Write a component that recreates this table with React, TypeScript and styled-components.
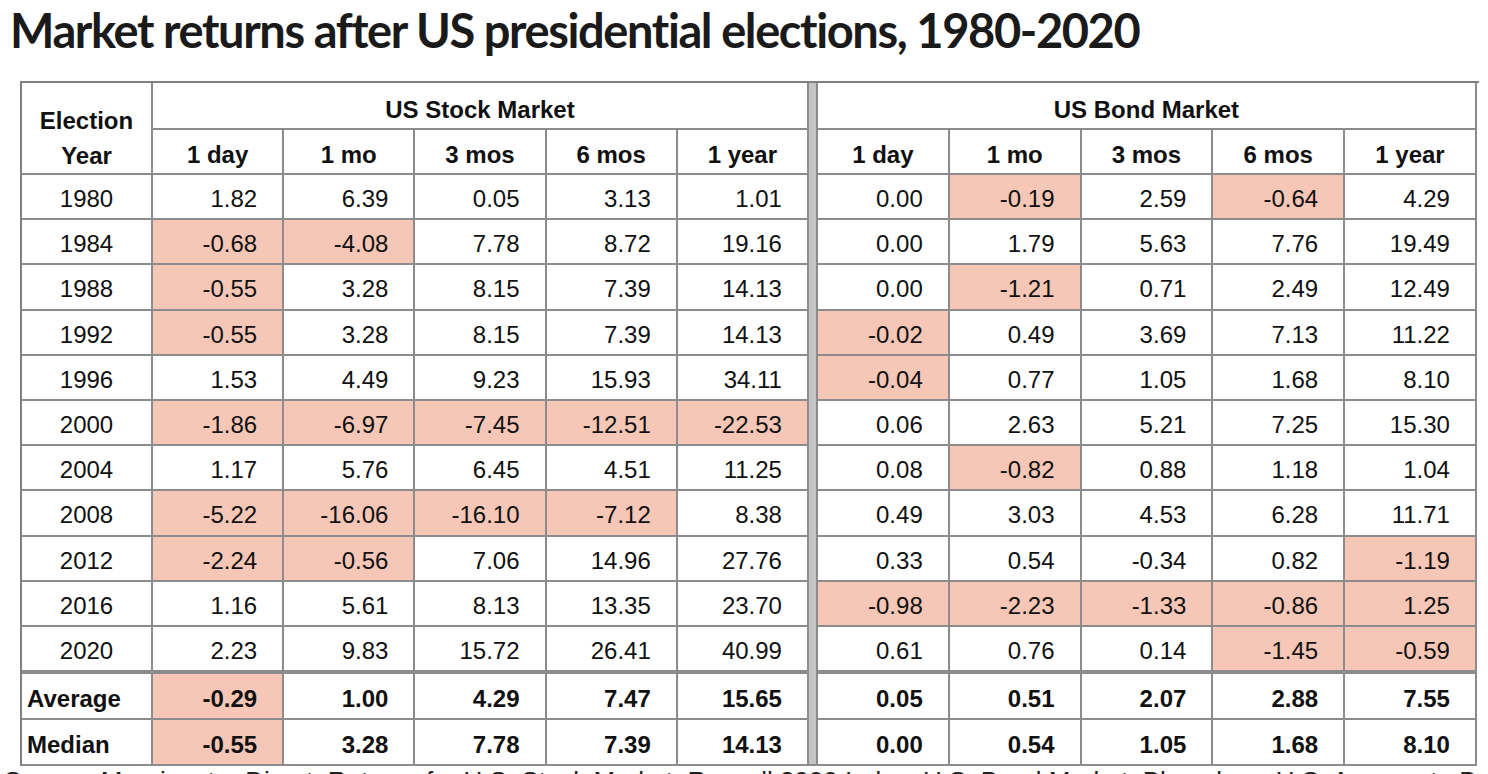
import styled, { createGlobalStyle } from 'styled-components';

const GlobalStyle = createGlobalStyle`
  html, body {
    margin: 0;
    padding: 0;
    overflow: hidden;
    background: #fff;
  }
`;

const Page = styled.div`
  width: 1488px;
  height: 774px;
  overflow: hidden;
  font-family: 'Liberation Sans', Arial, sans-serif;
  color: #111;
`;

const Title = styled.h1`
  margin: 0;
  padding: 2px 0 0 10px;
  height: 81px;
  box-sizing: border-box;
  font-family: Lato, 'Noto Sans', sans-serif;
  font-weight: 700;
  font-size: 47px;
  line-height: 56px;
  letter-spacing: -1.4px;
  color: #1a1a1a;
`;

const Grid = styled.div`
  margin-left: 20px;
  width: 1457px;
  display: grid;
  grid-template-columns: 131px repeat(5, 131.2px) 9px repeat(5, 131.8px);
  grid-template-rows: 47px 45px repeat(10, 45.2px) 47px 46px 46px;
  border-left: 2px solid #808080;
  border-top: 2px solid #808080;
`;

const Cell = styled.div<{ $hl?: boolean; $thick?: boolean; $bold?: boolean }>`
  box-sizing: border-box;
  display: flex;
  align-items: center;
  justify-content: flex-end;
  padding: ${({ $bold }) => ($bold ? '7px' : '5px')} 25px 0 0;
  border-right: 2px solid #8c8c8c;
  border-bottom: ${({ $thick }) => ($thick ? '4px' : '2px')} solid #8c8c8c;
  background: ${({ $hl }) => ($hl ? '#f6c6b6' : '#fff')};
  font-size: 24px;
  font-weight: ${({ $bold }) => ($bold ? 700 : 400)};
`;

const YearCell = styled(Cell)`
  justify-content: center;
  padding: 5px 0 0 0;
`;

const LabelCell = styled(Cell)`
  justify-content: flex-start;
  padding: 7px 0 0 5px;
  font-weight: 700;
`;

const HeadCorner = styled.div`
  box-sizing: border-box;
  grid-row: span 2;
  padding-top: 20px;
  border-right: 2px solid #8c8c8c;
  border-bottom: 2px solid #8c8c8c;
  text-align: center;
  font-size: 24px;
  font-weight: 700;
  line-height: 35px;
`;

const GroupHead = styled.div`
  box-sizing: border-box;
  grid-column: span 5;
  display: flex;
  align-items: center;
  justify-content: center;
  padding-top: 8px;
  border-right: 2px solid #8c8c8c;
  border-bottom: 2px solid #8c8c8c;
  font-size: 24px;
  font-weight: 700;
`;

const ColHead = styled.div`
  box-sizing: border-box;
  display: flex;
  align-items: center;
  justify-content: center;
  padding-top: 7px;
  border-right: 2px solid #8c8c8c;
  border-bottom: 2px solid #8c8c8c;
  font-size: 24px;
  font-weight: 700;
`;

const Divider = styled.div`
  grid-column: 7;
  grid-row: 1 / -1;
  box-sizing: border-box;
  background: #c4c4c4;
  border-right: 2px solid #8c8c8c;
  border-bottom: 2px solid #8c8c8c;
`;

const Source = styled.div`
  padding: 2px 0 0 4px;
  font-size: 26px;
  line-height: 26px;
  white-space: nowrap;
  color: #222;
`;

const periods = ['1 day', '1 mo', '3 mos', '6 mos', '1 year'];

// '*' marks a shaded cell
const rows: [string, string[]][] = [
  ['1980', ['1.82', '6.39', '0.05', '3.13', '1.01', '0.00', '*-0.19', '2.59', '*-0.64', '4.29']],
  ['1984', ['*-0.68', '*-4.08', '7.78', '8.72', '19.16', '0.00', '1.79', '5.63', '7.76', '19.49']],
  ['1988', ['*-0.55', '3.28', '8.15', '7.39', '14.13', '0.00', '*-1.21', '0.71', '2.49', '12.49']],
  ['1992', ['*-0.55', '3.28', '8.15', '7.39', '14.13', '*-0.02', '0.49', '3.69', '7.13', '11.22']],
  ['1996', ['1.53', '4.49', '9.23', '15.93', '34.11', '*-0.04', '0.77', '1.05', '1.68', '8.10']],
  ['2000', ['*-1.86', '*-6.97', '*-7.45', '*-12.51', '*-22.53', '0.06', '2.63', '5.21', '7.25', '15.30']],
  ['2004', ['1.17', '5.76', '6.45', '4.51', '11.25', '0.08', '*-0.82', '0.88', '1.18', '1.04']],
  ['2008', ['*-5.22', '*-16.06', '*-16.10', '*-7.12', '8.38', '0.49', '3.03', '4.53', '6.28', '11.71']],
  ['2012', ['*-2.24', '*-0.56', '7.06', '14.96', '27.76', '0.33', '0.54', '-0.34', '0.82', '*-1.19']],
  ['2016', ['1.16', '5.61', '8.13', '13.35', '23.70', '*-0.98', '*-2.23', '*-1.33', '*-0.86', '*1.25']],
  ['2020', ['2.23', '9.83', '15.72', '26.41', '40.99', '0.61', '0.76', '0.14', '*-1.45', '*-0.59']],
];

const summary: [string, string[]][] = [
  ['Average', ['*-0.29', '1.00', '4.29', '7.47', '15.65', '0.05', '0.51', '2.07', '2.88', '7.55']],
  ['Median', ['*-0.55', '3.28', '7.78', '7.39', '14.13', '0.00', '0.54', '1.05', '1.68', '8.10']],
];

const renderValue = (v: string, key: string, thick = false, bold = false) => {
  const hl = v.startsWith('*');
  return (
    <Cell key={key} $hl={hl} $thick={thick} $bold={bold}>
      {hl ? v.slice(1) : v}
    </Cell>
  );
};

const App = () => {
  return (
    <Page>
      <GlobalStyle />
      <Title>Market returns after US presidential elections, 1980-2020</Title>
      <Grid>
        <Divider />
        <HeadCorner>
          Election
          <br />
          Year
        </HeadCorner>
        <GroupHead>US Stock Market</GroupHead>
        <GroupHead>US Bond Market</GroupHead>
        {periods.map((p) => (
          <ColHead key={'s' + p}>{p}</ColHead>
        ))}
        {periods.map((p) => (
          <ColHead key={'b' + p}>{p}</ColHead>
        ))}
        {rows.map(([year, vals], i) => {
          const thick = i === rows.length - 1;
          return [
            <YearCell key={year} $thick={thick}>
              {year}
            </YearCell>,
            ...vals.map((v, j) => renderValue(v, year + j, thick)),
          ];
        })}
        {summary.map(([label, vals]) => [
          <LabelCell key={label}>{label}</LabelCell>,
          ...vals.map((v, j) => renderValue(v, label + j, false, true)),
        ])}
      </Grid>
      <Source>
        Source: Morningstar Direct. Returns for U.S. Stock Market: Russell 3000 Index; U.S. Bond Market: Bloomberg U.S. Aggregate Bond Index.
      </Source>
    </Page>
  );
};

export default App;
